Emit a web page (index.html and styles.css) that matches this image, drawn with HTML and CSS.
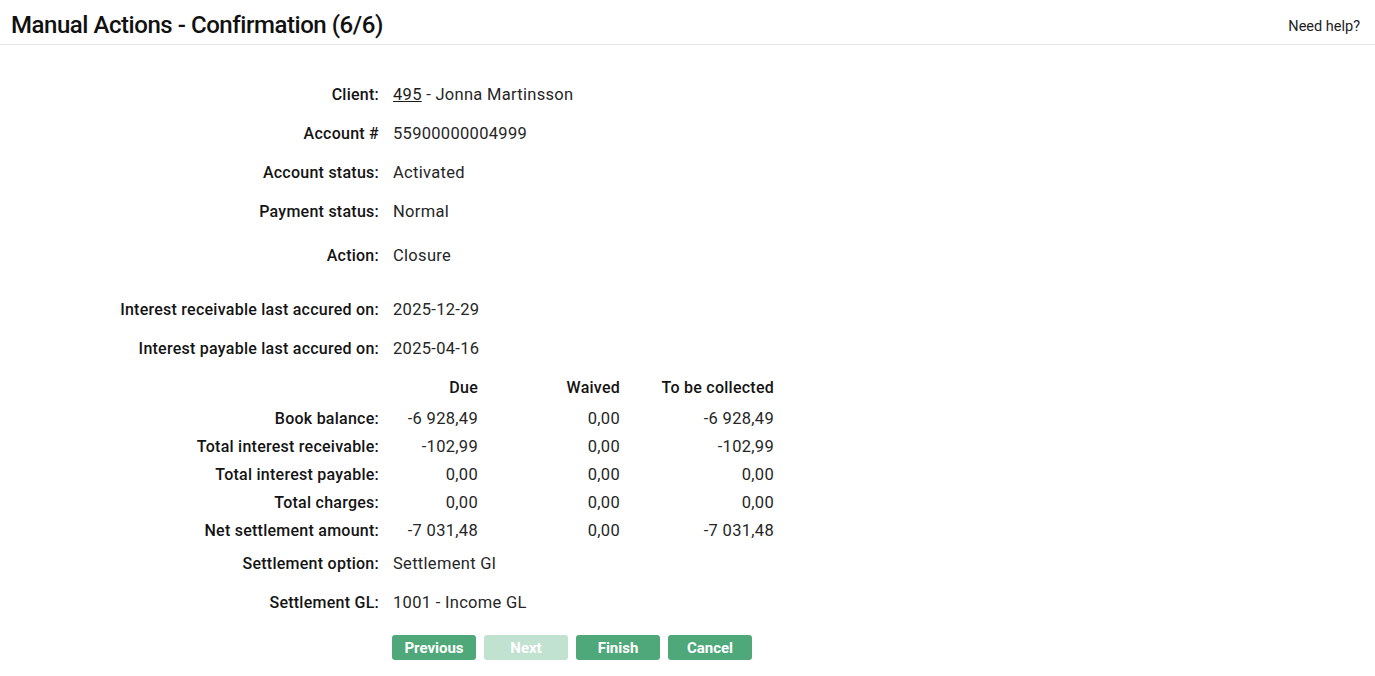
FILE: index.html
```html
<!DOCTYPE html>
<html lang="en">

<head>
    <meta charset="UTF-8">
    <meta name="viewport" content="width=device-width, initial-scale=1.0">
    <title>Manual Actions - Confirmation</title>
    <link rel="stylesheet" href="styles.css">
</head>

<body>
    <div class="page-header">
        <h1>Manual Actions - Confirmation (6/6)</h1>
        <a class="help-link" href="#">Need help?</a>
    </div>

    <div class="summary">
        <div class="field">
            <span class="label">Client:</span>
            <span class="value"><a href="#">495</a> - Jonna Martinsson</span>
        </div>
        <div class="field">
            <span class="label">Account #</span>
            <span class="value">55900000004999</span>
        </div>
        <div class="field">
            <span class="label">Account status:</span>
            <span class="value">Activated</span>
        </div>
        <div class="field">
            <span class="label">Payment status:</span>
            <span class="value">Normal</span>
        </div>
        <div class="field field-action">
            <span class="label">Action:</span>
            <span class="value">Closure</span>
        </div>

        <div class="field field-accrual">
            <span class="label">Interest receivable last accured on:</span>
            <span class="value">2025-12-29</span>
        </div>
        <div class="field">
            <span class="label">Interest payable last accured on:</span>
            <span class="value">2025-04-16</span>
        </div>

        <!-- settlement amounts -->
        <div class="amounts amounts-head">
            <span></span>
            <span class="num">Due</span>
            <span class="num">Waived</span>
            <span class="num">To be collected</span>
        </div>
        <div class="amounts">
            <span class="label">Book balance:</span>
            <span class="num">-6 928,49</span>
            <span class="num">0,00</span>
            <span class="num">-6 928,49</span>
        </div>
        <div class="amounts">
            <span class="label">Total interest receivable:</span>
            <span class="num">-102,99</span>
            <span class="num">0,00</span>
            <span class="num">-102,99</span>
        </div>
        <div class="amounts">
            <span class="label">Total interest payable:</span>
            <span class="num">0,00</span>
            <span class="num">0,00</span>
            <span class="num">0,00</span>
        </div>
        <div class="amounts">
            <span class="label">Total charges:</span>
            <span class="num">0,00</span>
            <span class="num">0,00</span>
            <span class="num">0,00</span>
        </div>
        <div class="amounts">
            <span class="label">Net settlement amount:</span>
            <span class="num">-7 031,48</span>
            <span class="num">0,00</span>
            <span class="num">-7 031,48</span>
        </div>

        <div class="field">
            <span class="label">Settlement option:</span>
            <span class="value">Settlement Gl</span>
        </div>
        <div class="field">
            <span class="label">Settlement GL:</span>
            <span class="value">1001 - Income GL</span>
        </div>

        <div class="buttons">
            <button class="btn">Previous</button>
            <button class="btn" disabled>Next</button>
            <button class="btn">Finish</button>
            <button class="btn">Cancel</button>
        </div>
    </div>
</body>

</html>
```

FILE: styles.css
```css
body {
    margin: 0;
    font-family: Roboto, "Liberation Sans", sans-serif;
    font-size: 16px;
    color: #1c1c1c;
    background-color: #fff;
}

.page-header {
    display: flex;
    justify-content: space-between;
    align-items: center;
    box-sizing: border-box;
    height: 45px;
    padding: 6px 15px 0 11px;
    border-bottom: 1px solid #e4e4e4;
}

.page-header h1 {
    margin: 0;
    font-size: 24px;
    font-weight: 500;
    letter-spacing: -0.45px;
    color: #111;
}

.help-link {
    font-size: 14.5px;
    color: #222;
    text-decoration: none;
    padding-top: 2px;
}

.summary {
    padding-top: 30px;
}

.field {
    display: grid;
    grid-template-columns: 379px 1fr;
    column-gap: 14px;
    align-items: center;
    height: 39px;
}

.field-action {
    margin-top: 5px;
}

.field-accrual {
    margin-top: 15px;
}

.label {
    text-align: right;
    font-weight: 500;
    letter-spacing: 0.25px;
    color: #141414;
}

.value,
.num {
    font-size: 16.5px;
    letter-spacing: 0.3px;
    color: #262626;
}

.value a {
    color: #1c1c1c;
}

.amounts {
    display: grid;
    grid-template-columns: 379px 85px 128px 140px;
    column-gap: 14px;
    align-items: center;
    height: 28px;
}

.amounts-head {
    box-sizing: border-box;
    height: 36px;
    padding-top: 3px;
}

.amounts-head .num {
    font-size: 16px;
    font-weight: 500;
    letter-spacing: 0.25px;
    color: #141414;
}

.num {
    text-align: right;
}

.buttons {
    display: flex;
    gap: 8px;
    margin-top: 13px;
    padding-left: 392px;
}

.btn {
    width: 84px;
    height: 25px;
    padding: 0;
    border: none;
    border-radius: 3px;
    background-color: #4ea87a;
    color: #fff;
    font-family: inherit;
    font-size: 15px;
    font-weight: 700;
    cursor: pointer;
}

.btn:disabled {
    background-color: #c1e1d1;
    cursor: default;
}
```
